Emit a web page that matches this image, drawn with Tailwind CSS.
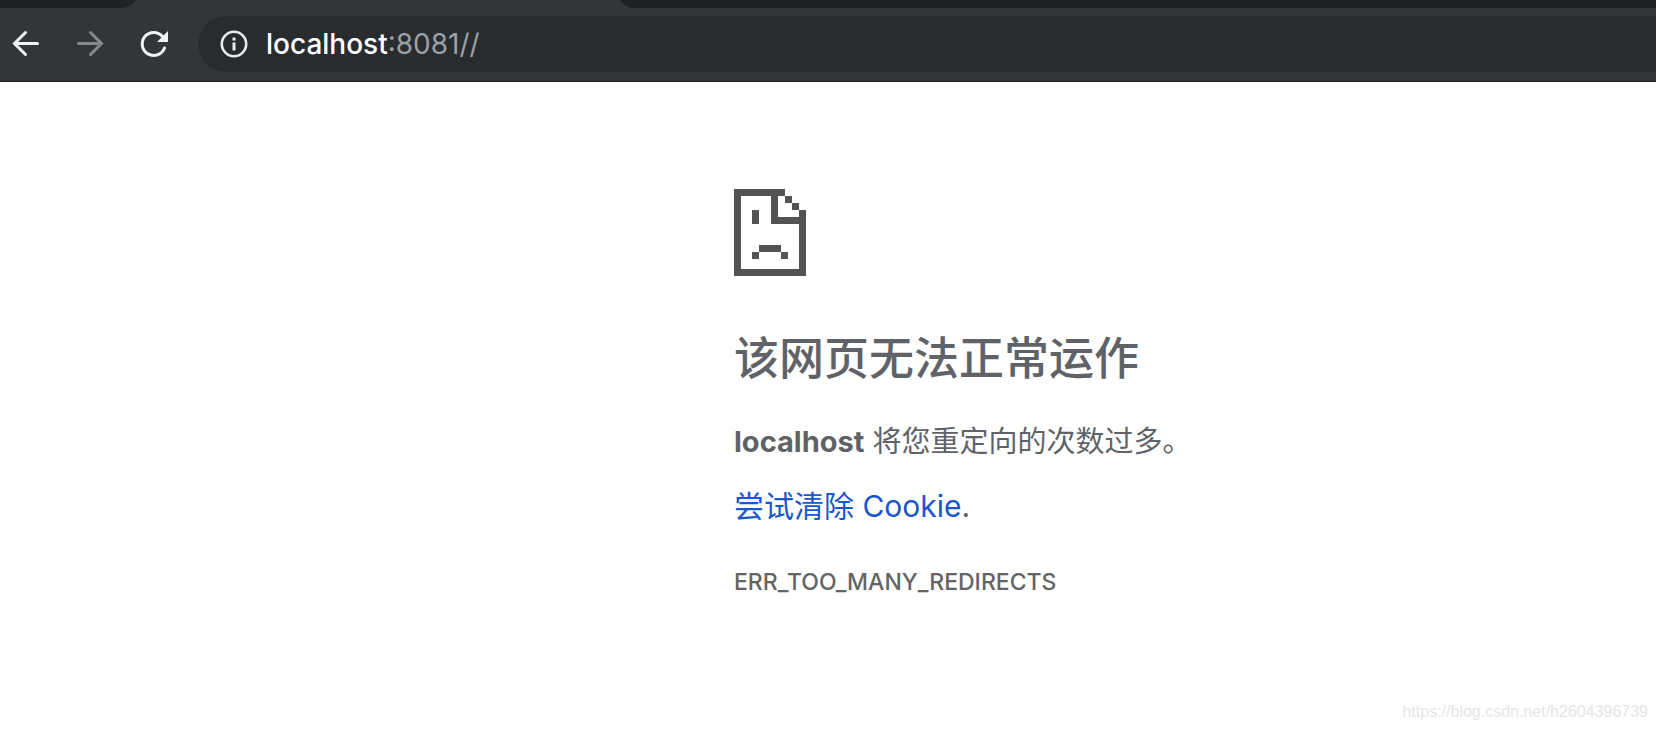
<!DOCTYPE html>
<html lang="zh-CN">

<head>
  <meta charset="UTF-8" />
  <meta name="viewport" content="width=device-width, initial-scale=1.0" />
  <title>localhost</title>
  <script src="https://cdn.jsdelivr.net/npm/@tailwindcss/browser@4"></script>
</head>

<body class="relative min-h-screen bg-white text-[#5f6368] font-['Inter','Noto_Sans_CJK_SC',sans-serif]">
  <header class="bg-[#333639] border-b border-[#202124]">
    <!-- tab strip -->
    <div class="flex h-2 items-end overflow-hidden">
      <div class="h-4 w-[138px] shrink-0 rounded-br-2xl bg-[#202124]"></div>
      <div class="w-[480px] shrink-0"></div>
      <div class="h-4 flex-1 rounded-bl-2xl bg-[#202124]"></div>
    </div>

    <!-- toolbar -->
    <div class="flex items-center pt-2 pb-[9px]">
      <nav class="flex items-center gap-6 pl-1.5">
        <button type="button" aria-label="后退" class="text-[#f1f3f4]">
          <svg class="size-10" viewBox="0 0 40 40" fill="none" stroke="currentColor" stroke-width="3"
            stroke-linecap="round" stroke-linejoin="miter">
            <path d="M31.500 19.500H9M19.500 8.500L8.500 19.500L19.500 30.500" />
          </svg>
        </button>
        <button type="button" aria-label="前进" class="text-[#85898c]" disabled>
          <svg class="size-10" viewBox="0 0 40 40" fill="none" stroke="currentColor" stroke-width="3"
            stroke-linecap="round" stroke-linejoin="miter">
            <path d="M8.500 19.500H31M20.500 8.500L31.500 19.500L20.500 30.500" />
          </svg>
        </button>
        <button type="button" aria-label="重新加载" class="text-[#f1f3f4]">
          <svg class="size-10" viewBox="0 0 40 40" fill="none">
            <path d="M30.500 24A11.500 11.500 0 1 1 28.500 12.500" stroke="currentColor" stroke-width="3"
              stroke-linecap="round" />
            <path d="M34 7V18H23Z" fill="currentColor" />
          </svg>
        </button>
      </nav>

      <div class="ml-6 flex h-14 flex-1 items-center rounded-l-full bg-[#292c2f] pl-[22px]">
        <button type="button" aria-label="查看网站信息" class="mr-[18px] text-[#e8eaed]">
          <svg class="size-7" viewBox="0 0 28 28" fill="none">
            <circle cx="14" cy="14" r="12.200" stroke="currentColor" stroke-width="2.600" />
            <path d="M12.500 7.500H15.500V10.500H12.500ZM12.500 12.500H15.500V20.500H12.500Z" fill="currentColor" />
          </svg>
        </button>
        <a href="#" class="text-[28px] leading-9 text-[#9aa0a6]"><span class="font-medium text-white">localhost</span>:8081//</a>
      </div>
    </div>
  </header>

  <main class="pl-[734px] pt-[107px]">
    <svg class="h-[87px] w-[72px]" viewBox="0 0 72 87" fill="#535353" shape-rendering="crispEdges" aria-hidden="true">
      <path fill-rule="evenodd" d="M0 0H51V7H44V28H65V21H72V87H0ZM7 7V80H65V35H37V7Z" />
      <path d="M51 7H58V14H51ZM58 14H65V21H58ZM18 21H25V35H18Z" />
      <path d="M25 56H47V63H25ZM18 63H25V70H18ZM47 63H54V70H47Z" />
    </svg>

    <h1 class="mt-[53px] text-[45px] leading-[60px] font-medium">该网页无法正常运作</h1>
    <p class="mt-[33px] text-[29px] leading-10"><strong class="font-bold">localhost</strong> 将您重定向的次数过多。</p>
    <p class="mt-6 text-[30px] leading-10"><a href="#" class="text-[#1a56cc]">尝试清除 Cookie</a>.</p>
    <p class="mt-[38px] text-[23px] leading-9 font-medium text-[#646464]">ERR_TOO_MANY_REDIRECTS</p>
  </main>

  <div class="absolute right-2 bottom-2 text-base leading-5 text-[#e6e6e6] font-['Liberation_Sans',sans-serif]">
    https://blog.csdn.net/h2604396739</div>
</body>

</html>
